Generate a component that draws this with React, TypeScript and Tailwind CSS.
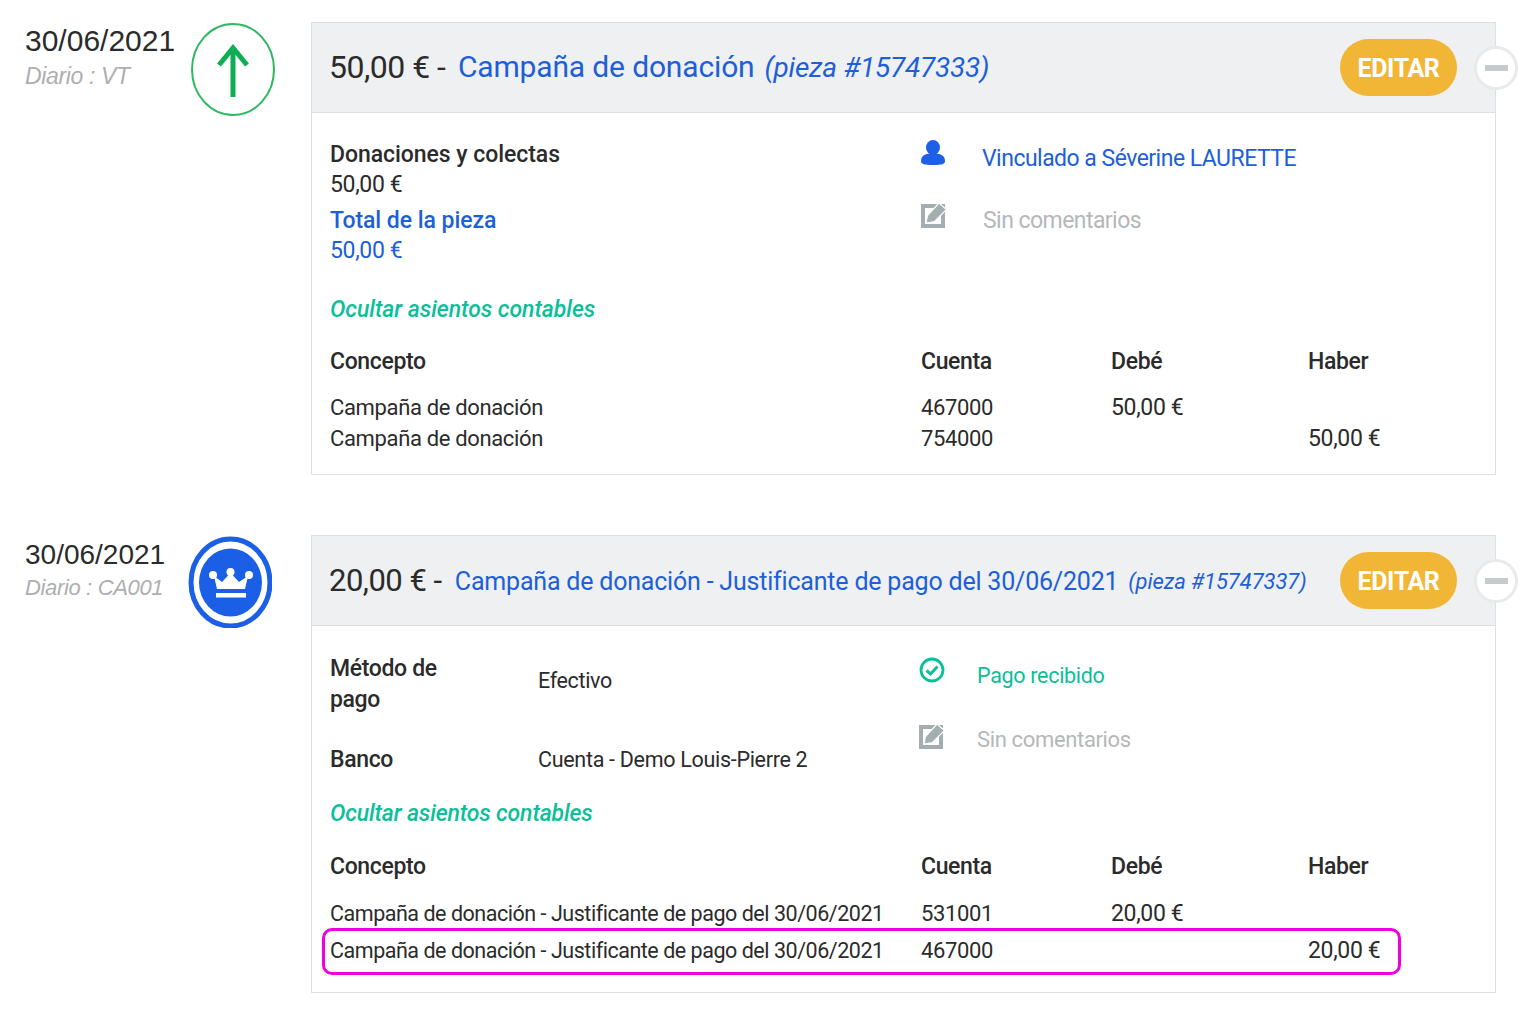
import React from "react";

const F = "font-['Roboto',sans-serif]";

function ArrowIcon() {
  return (
    <svg width="84" height="93" viewBox="0 0 84 93" className="shrink-0">
      <ellipse cx="42" cy="46.5" rx="41" ry="45.5" fill="none" stroke="#2fb863" strokeWidth="2" />
      <path d="M42 74V24" fill="none" stroke="#0fae55" strokeWidth="5" />
      <path d="M28 42L42 25L56 42" fill="none" stroke="#0fae55" strokeWidth="5" />
    </svg>
  );
}

function CrownIcon() {
  return (
    <svg width="84" height="92" viewBox="0 0 84 92" className="shrink-0">
      <ellipse cx="42.5" cy="46.5" rx="39.5" ry="43.5" fill="none" stroke="#1b5fe6" strokeWidth="5" />
      <ellipse cx="42.5" cy="46.5" rx="31.5" ry="34" fill="#1b5fe6" />
      <circle cx="25" cy="39" r="4" fill="#fff" />
      <circle cx="42.5" cy="36" r="4" fill="#fff" />
      <circle cx="61" cy="39" r="4" fill="#fff" />
      <path d="M26 40L34 46L42.5 37L51 46L60 40L57 53H29Z" fill="#fff" />
      <rect x="28" y="57" width="30" height="4.5" fill="#fff" />
    </svg>
  );
}

function UserIcon() {
  return (
    <svg width="24" height="26" viewBox="0 0 24 26" className="shrink-0">
      <ellipse cx="12" cy="7.5" rx="7" ry="7.5" fill="#1d5fe6" />
      <path d="M0 21C0 15 5 13.5 12 13.5S24 15 24 21C24 24 21 25 12 25S0 24 0 21Z" fill="#1d5fe6" />
    </svg>
  );
}

function EditIcon() {
  return (
    <svg width="26" height="26" viewBox="0 0 26 26" className="shrink-0">
      <rect x="2" y="4" width="20" height="20" fill="#fff" stroke="#a3aeb0" strokeWidth="4" />
      <path d="M5 21L6.5 13.5L18 1L25.5 7.5L13.5 19.5Z" fill="#a3aeb0" stroke="#fff" strokeWidth="1.2" />
    </svg>
  );
}

function CheckIcon() {
  return (
    <svg width="26" height="26" viewBox="0 0 26 26" className="shrink-0">
      <circle cx="13" cy="13" r="11" fill="none" stroke="#0cbf9a" strokeWidth="2.8" />
      <path d="M7.5 13.5L11.5 17L18.5 9.5" fill="none" stroke="#0cbf9a" strokeWidth="3" />
    </svg>
  );
}

function Header({ amount, title, piece, amountSize, titleClass, pieceClass }: { amount: string; title: string; piece: string; amountSize: string; titleClass: string; pieceClass: string }) {
  return (
    <div className="relative flex h-[90px] items-center bg-[#eff0f2] border-b border-[#dfe0e2] pl-[18px]">
      <span className={`${amountSize} -ml-[1px] text-[#2b2b2b] tracking-[-0.5px] whitespace-pre`}>{amount} - </span>
      <span className={`${titleClass} text-[#1d5fd8] whitespace-nowrap`}>{title}</span>
      <span className={`${pieceClass} italic text-[#1d5fd8] whitespace-nowrap`}>{piece}</span>
      <div className="absolute right-[38px] top-[16px] flex h-[57px] w-[117px] items-center justify-center rounded-full bg-[#f2b636] pt-[2px] text-[25px] font-bold text-white tracking-[-0.4px]">EDITAR</div>
      <div className="absolute right-[-23px] top-[23px] flex h-[44px] w-[44px] items-center justify-center rounded-full border-[3px] border-[#e9eaec] bg-white">
        <div className="h-[6px] w-[23px] bg-[#c8cacd]" />
      </div>
    </div>
  );
}

function Grid({ rows, highlight, textClass }: { rows: [string, string, string, string][]; highlight?: boolean; textClass: string }) {
  return (
    <div>
      <div className="grid grid-cols-[591px_190px_197px_1fr] h-[30px] items-center font-medium text-[#2b2b2b]">
        <span>Concepto</span><span>Cuenta</span><span>Debé</span><span>Haber</span>
      </div>
      {rows.map((r, i) => (
        <div key={i} className={`relative grid grid-cols-[591px_190px_197px_1fr] h-[30px] items-center text-[#2b2b2b] ${i === 0 ? (highlight ? "mt-[17px]" : "mt-[16px]") : highlight ? "mt-[7px]" : "mt-[1px]"}`}>
          <span className={`whitespace-nowrap ${textClass}`}>{r[0]}</span>
          <span className="text-[22px] tracking-[-0.35px]">{r[1]}</span>
          <span>{r[2]}</span>
          <span>{r[3]}</span>
          {highlight && i === 1 && (
            <div className="absolute left-[-8px] top-[-8px] h-[47px] w-[1079px] rounded-[10px] border-[3px] border-[#f000e0]" />
          )}
        </div>
      ))}
    </div>
  );
}

export default function App() {
  return (
    <div className={`${F} h-[1024px] w-[1536px] overflow-hidden bg-white text-[23px] leading-[30px] text-[#2b2b2b] tracking-[-0.35px] pt-[22px]`}>
      {/* Entry 1 */}
      <div className="flex">
        <div className="flex w-[311px] shrink-0 items-start pl-[25px]">
          <div className="w-[166px] font-['Liberation_Sans',sans-serif]">
            <div className="text-[30px] leading-[38px] tracking-[0px]">30/06/2021</div>
            <div className="text-[23px] leading-[28px] italic text-[#aeaeb0] mt-[2px]">Diario : VT</div>
          </div>
          <div className="mt-[1px]"><ArrowIcon /></div>
        </div>
        <div className="w-[1185px] border border-[#dfe0e2]">
          <Header amount="50,00 €" amountSize="text-[32px] -mt-[2px]" title="Campaña de donación" piece="(pieza #15747333)" titleClass="ml-[5px] -mt-[2px] text-[30px] tracking-[-0.15px]" pieceClass="ml-[10px] text-[28px] tracking-[-0.25px]" />
          <div className="pl-[18px] pt-[27px] pb-[20px]">
            <div className="flex">
              <div className="w-[591px]">
                <div className="font-medium tracking-[-0.05px]">Donaciones y colectas</div>
                <div>50,00 €</div>
                <div className="mt-[6px] font-medium text-[#1d5fd8] tracking-[-0.05px]">Total de la pieza</div>
                <div className="text-[#1d5fd8]">50,00 €</div>
              </div>
              <div>
                <div className="flex h-[30px] items-center">
                  <div className="w-[61px] -translate-y-[2px]"><UserIcon /></div>
                  <span className="text-[#1d5fd8] mt-[8px] tracking-[-0.52px]">Vinculado a Séverine LAURETTE</span>
                </div>
                <div className="flex h-[30px] items-center mt-[36px]">
                  <div className="w-[62px] -translate-y-[6px]"><EditIcon /></div>
                  <span className="text-[#b5b8ba] tracking-[-0.55px]">Sin comentarios</span>
                </div>
              </div>
            </div>
            <div className="mt-[29px] font-medium italic text-[#0bbf98] tracking-[-0.05px]">Ocultar asientos contables</div>
            <div className="mt-[22px]">
              <Grid textClass="text-[22px]" rows={[["Campaña de donación", "467000", "50,00 €", ""], ["Campaña de donación", "754000", "", "50,00 €"]]} />
            </div>
          </div>
        </div>
      </div>

      {/* Entry 2 */}
      <div className="flex mt-[60px]">
        <div className="flex w-[311px] shrink-0 items-start pl-[25px] pt-[1px]">
          <div className="w-[164px] font-['Liberation_Sans',sans-serif]">
            <div className="text-[28px] leading-[38px] tracking-[0px]">30/06/2021</div>
            <div className="text-[22px] leading-[28px] italic text-[#aeaeb0]">Diario : CA001</div>
          </div>
          <div className="-ml-[1px]"><CrownIcon /></div>
        </div>
        <div className="w-[1185px] border border-[#dfe0e2]">
          <Header amount="20,00 €" amountSize="text-[31px] mt-[1px]" title="Campaña de donación - Justificante de pago del 30/06/2021" piece="(pieza #15747337)" titleClass="ml-[6px] mt-[3px] text-[25px] tracking-[-0.2px]" pieceClass="ml-[10px] mt-[3px] text-[22px] tracking-[-0.1px]" />
          <div className="pl-[18px] pt-[27px] pb-[26px]">
            <div className="flex">
              <div className="w-[589px]">
                <div className="grid grid-cols-[208px_1fr]">
                  <div className="font-medium leading-[31px]">Método de<br />pago</div>
                  <div className="mt-[13px] text-[21.5px] tracking-[-0.35px]">Efectivo</div>
                </div>
                <div className="grid grid-cols-[208px_1fr] mt-[30px]">
                  <div className="font-medium">Banco</div>
                  <div className="text-[21.5px] tracking-[-0.3px]">Cuenta - Demo Louis-Pierre 2</div>
                </div>
              </div>
              <div>
                <div className="flex h-[30px] items-center mt-[8px]">
                  <div className="w-[58px] -translate-y-[6px]"><CheckIcon /></div>
                  <span className="text-[#0bbf98] text-[21.5px] tracking-[-0.3px]">Pago recibido</span>
                </div>
                <div className="flex h-[30px] items-center mt-[34px]">
                  <div className="w-[58px] -translate-y-[4px]"><EditIcon /></div>
                  <span className="text-[#b5b8ba] text-[22px] tracking-[-0.35px]">Sin comentarios</span>
                </div>
              </div>
            </div>
            <div className="mt-[24px] font-medium italic text-[#0bbf98] tracking-[-0.15px]">Ocultar asientos contables</div>
            <div className="mt-[23px]">
              <Grid highlight textClass="text-[21.5px] tracking-[-0.47px]" rows={[["Campaña de donación - Justificante de pago del 30/06/2021", "531001", "20,00 €", ""], ["Campaña de donación - Justificante de pago del 30/06/2021", "467000", "", "20,00 €"]]} />
            </div>
          </div>
        </div>
      </div>
    </div>
  );
}
